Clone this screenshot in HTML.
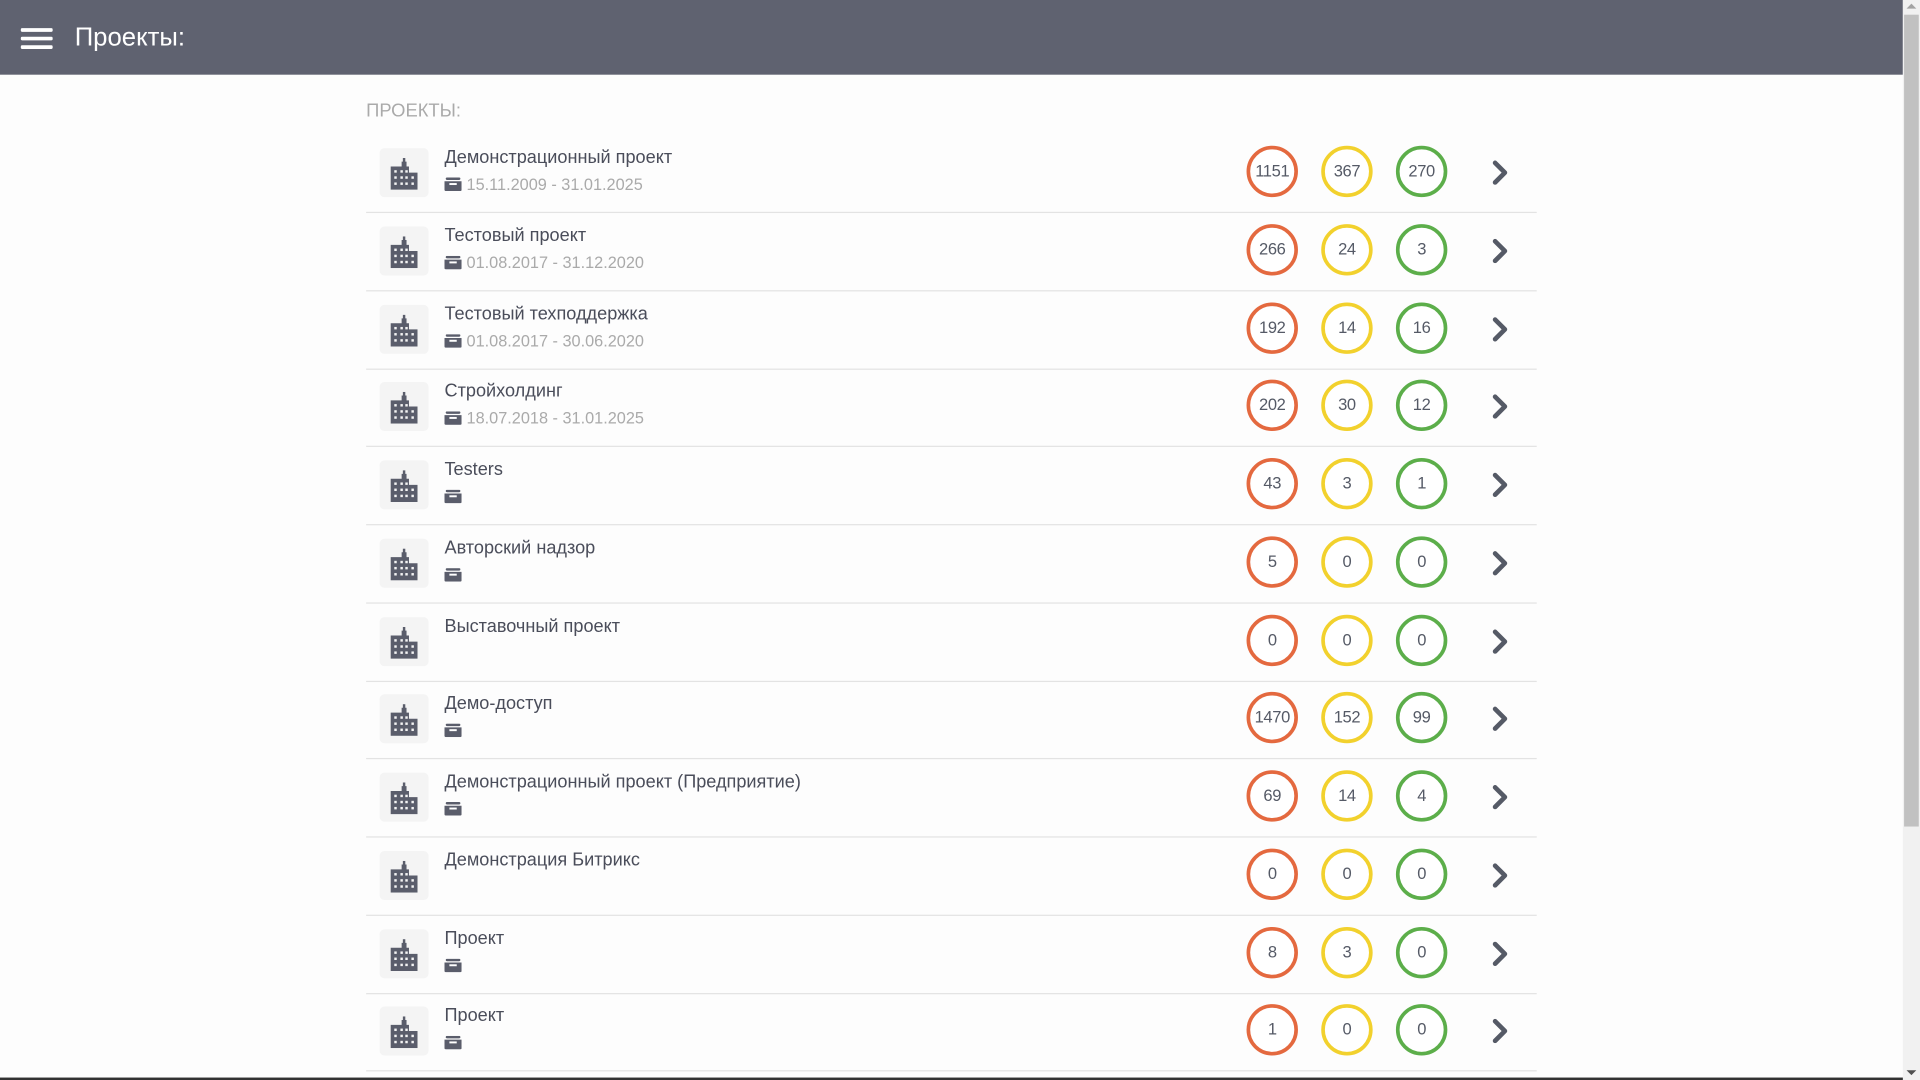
<!DOCTYPE html>
<html><head><meta charset="utf-8">
<style>
html,body{margin:0;padding:0;width:1920px;height:1080px;overflow:hidden;background:#fdfdfd;}
#w{position:absolute;left:0;top:0;width:1568px;height:882px;transform:scale(1.22449);transform-origin:0 0;font-family:"Liberation Sans",Arial,sans-serif;}
.hdr{position:absolute;left:0;top:0;width:1554px;height:61px;background:#5f6270;}
.hb{position:absolute;left:17px;width:26px;height:3px;background:#fff;border-radius:1px;}
.ttl{position:absolute;left:61px;top:19px;font-size:21px;color:#fff;}
.cap{position:absolute;left:299px;top:82px;font-size:15px;color:#aaa;}
.row{position:absolute;left:299px;width:956px;height:63px;border-bottom:1px solid #e3e3e3;}
.ib{position:absolute;left:11px;top:11px;width:40px;height:40px;background:#f4f4f4;border-radius:4px;}
.ib svg{position:absolute;left:9px;top:8px;}
.nm{position:absolute;left:64px;top:11px;font-size:14.8px;color:#4a4d5a;white-space:nowrap;}
.dt{position:absolute;left:64px;top:33px;font-size:13.3px;color:#aaa;white-space:nowrap;}
.dt svg{vertical-align:-1px;margin-right:4px;}
.c{position:absolute;top:9px;width:36px;height:36px;border:3px solid;border-radius:50%;font-size:13.5px;color:#555a66;text-align:center;line-height:36px;background:#fff;letter-spacing:-0.3px;}
.o{left:719px;border-color:#e4693f}.y{left:780px;border-color:#f2d12d}.g{left:841px;border-color:#5cae4a}
.ch{position:absolute;left:919px;top:21px;}
.sb{position:absolute;left:1554px;top:0;width:14px;height:882px;background:#f1f1f1;}
.th{position:absolute;left:1555px;top:12px;width:12px;height:663px;background:#c1c1c1;}
.bot{position:absolute;left:0;top:880px;width:1554px;height:2px;background:#333;}
</style></head><body><div id="w">
<div class="hdr"><div class="hb" style="top:23px"></div><div class="hb" style="top:30px"></div><div class="hb" style="top:37px"></div><div class="ttl">Проекты:</div></div>
<div class="cap">ПРОЕКТЫ:</div>
<div id="list"></div>
<div class="sb"></div><div class="th"></div>
<div style="position:absolute;left:1557px;top:3px;width:0;height:0;border-left:4px solid transparent;border-right:4px solid transparent;border-bottom:4px solid #a3a3a3"></div>
<div style="position:absolute;left:1557px;top:874px;width:0;height:0;border-left:4px solid transparent;border-right:4px solid transparent;border-top:4px solid #505050"></div>
<div class="bot"></div>
</div>
<script>
var d=[["Демонстрационный проект","15.11.2009 - 31.01.2025",1151,367,270],
["Тестовый проект","01.08.2017 - 31.12.2020",266,24,3],
["Тестовый техподдержка","01.08.2017 - 30.06.2020",192,14,16],
["Стройхолдинг","18.07.2018 - 31.01.2025",202,30,12],
["Testers","",43,3,1],
["Авторский надзор","",5,0,0],
["Выставочный проект",null,0,0,0],
["Демо-доступ","",1470,152,99],
["Демонстрационный проект (Предприятие)","",69,14,4],
["Демонстрация Битрикс",null,0,0,0],
["Проект","",8,3,0],
["Проект","",1,0,0]];
var bld='<svg width="22" height="26" viewBox="0 0 22 26"><path fill="#5a5d6b" d="M9 3h1V0h2v3h1v4h2v5h7v14H0V7h9z"/><g fill="#f4f4f4"><rect x="3" y="10" width="2" height="2"/><rect x="8" y="10" width="2" height="2"/><rect x="12" y="10" width="2" height="2"/><rect x="3" y="15" width="2" height="2"/><rect x="8" y="15" width="2" height="2"/><rect x="12" y="15" width="2" height="2"/><rect x="17" y="15" width="2" height="2"/><rect x="3" y="20" width="2" height="2"/><rect x="8" y="20" width="2" height="2"/><rect x="12" y="20" width="2" height="2"/><rect x="17" y="20" width="2" height="2"/></g></svg>';
var box='<svg width="14" height="11" viewBox="0 0 14 11"><rect x="1" y="0" width="12" height="2" rx="1" fill="#5a5d6b"/><path d="M0 3h14v7a1 1 0 0 1-1 1H1a1 1 0 0 1-1-1z" fill="#5a5d6b"/><rect x="4" y="4.5" width="6" height="1.6" fill="#fff"/></svg>';
var ch='<svg width="14" height="20" viewBox="0 0 14 20"><path d="M3 2l8 8-8 8" fill="none" stroke="#555a66" stroke-width="3.8" stroke-linecap="round" stroke-linejoin="round"/></svg>';
var h='';
for(var i=0;i<d.length;i++){var r=d[i],t=110+i*63.75;
h+='<div class="row" style="top:'+t+'px"><div class="ib">'+bld+'</div><div class="nm">'+r[0]+'</div>'+(r[1]!==null?'<div class="dt">'+box+r[1]+'</div>':'')+
'<div class="c o">'+r[2]+'</div><div class="c y">'+r[3]+'</div><div class="c g">'+r[4]+'</div><div class="ch">'+ch+'</div></div>';}
document.getElementById('list').innerHTML=h;
</script>
</body></html>
